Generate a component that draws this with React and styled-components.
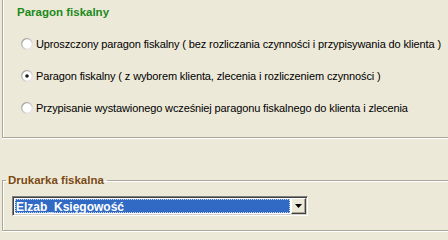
import React from 'react';
import styled, { createGlobalStyle } from 'styled-components';

const Global = createGlobalStyle`
  html, body {
    margin: 0;
    padding: 0;
    background: #ece9d8;
  }
  body {
    font-family: Tahoma, "Liberation Sans", "DejaVu Sans", sans-serif;
    font-size: 11px;
    color: #000;
  }
`;

const Screen = styled.div`
  width: 448px;
  height: 235px;
  overflow: hidden;
  background: #ece9d8;
  display: flex;
  flex-direction: column;
`;

const TopPanel = styled.div`
  margin-left: 2px;
  height: 138px;
  flex-shrink: 0;
  border-left: 1px solid #aca899;
  border-bottom: 1px solid #aca899;
  box-shadow: inset 1px 0 0 #fff, 0 1px 0 #fff;
  padding: 5px 0 0 14px;
  box-sizing: border-box;
`;

const Title = styled.div`
  color: ${(p) => p.color};
  font-weight: bold;
  font-size: 11.5px;
  line-height: 14px;
`;

const Options = styled.div`
  display: flex;
  flex-direction: column;
  gap: 18px;
  margin-top: 18px;
`;

const Option = styled.label`
  display: flex;
  align-items: center;
  gap: 3px;
  height: 14px;
  padding-left: 4px;
  white-space: nowrap;
  letter-spacing: -0.12px;

  svg {
    flex-shrink: 0;
  }
`;

const RadioIcon = ({ checked }) => (
  <svg width="12" height="12" viewBox="0 0 12 12">
    <defs>
      <linearGradient id="rg" x1="0" y1="0" x2="1" y2="1">
        <stop offset="0" stopColor="#8e8f8f" />
        <stop offset="0.5" stopColor="#c8c8c4" />
        <stop offset="1" stopColor="#f4f4f0" />
      </linearGradient>
    </defs>
    <circle cx="6" cy="6" r="5.3" fill="#fff" stroke="url(#rg)" strokeWidth="1.2" />
    {checked && <circle cx="6" cy="6" r="1.8" fill="#1c1c1c" />}
  </svg>
);

const Group = styled.fieldset`
  margin: 36px 0 0 2px;
  padding: 10px 0 0 9px;
  height: 57px;
  flex-shrink: 0;
  box-sizing: border-box;
  border: none;
  border-top: 1px solid #aca899;
  border-left: 1px solid #aca899;
  border-bottom: 1px solid #aca899;
  box-shadow: inset 1px 1px 0 #fff, 0 1px 0 #fff;
  min-width: 0;
`;

const Legend = styled.legend`
  padding: 0 3px 0 2px;
  margin-left: -6px;
  color: #7b4a12;
  font-weight: bold;
  font-size: 11.5px;
`;

const Select = styled.div`
  width: 296px;
  height: 20px;
  display: flex;
  align-items: stretch;
  background: #fff;
  border: 1px solid;
  border-color: #808080 #fff #fff #808080;
  box-shadow: inset 1px 1px 0 #404040, inset -1px -1px 0 #d4d0c8;
  padding: 2px;
  box-sizing: border-box;
`;

const Value = styled.div`
  flex: 1;
  background: #316ac5;
  color: #fff;
  font-weight: bold;
  font-size: 12px;
  outline: 1px dotted #c8d4ec;
  outline-offset: -1px;
  padding-left: 1px;
  line-height: 16px;
  margin-right: 1px;
`;

const DropButton = styled.div`
  width: 13px;
  background: #ece9d8;
  border: 1px solid;
  border-color: #fff #404040 #404040 #fff;
  box-shadow: inset -1px -1px 0 #aca899;
  display: flex;
  align-items: center;
  justify-content: center;
  margin: -1px -1px -1px 0;
`;

const options = [
  { text: 'Uproszczony paragon fiskalny ( bez rozliczania czynności i przypisywania do klienta  )', checked: false },
  { text: 'Paragon fiskalny ( z wyborem klienta, zlecenia i rozliczeniem czynności )', checked: true },
  { text: 'Przypisanie wystawionego wcześniej paragonu fiskalnego do klienta i zlecenia', checked: false },
];

export default function App() {
  return (
    <Screen>
      <Global />
      <TopPanel>
        <Title color="#1a8a1a">Paragon fiskalny</Title>
        <Options>
          {options.map((o) => (
            <Option key={o.text}>
              <RadioIcon checked={o.checked} />
              <span>{o.text}</span>
            </Option>
          ))}
        </Options>
      </TopPanel>
      <Group>
        <Legend>Drukarka fiskalna</Legend>
        <Select>
          <Value>Elzab_Księgowość</Value>
          <DropButton>
            <svg width="7" height="4" viewBox="0 0 7 4">
              <path d="M0 0h7L3.5 4z" fill="#000" />
            </svg>
          </DropButton>
        </Select>
      </Group>
    </Screen>
  );
}
